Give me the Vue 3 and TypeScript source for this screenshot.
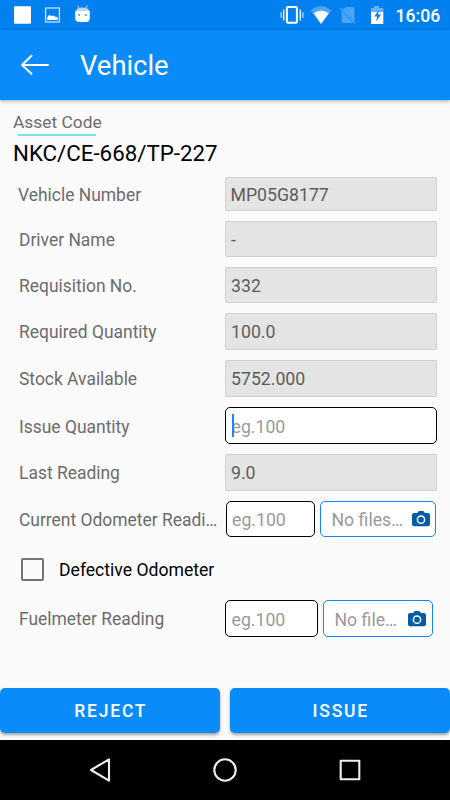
<script setup lang="ts">
interface Field {
  label: string
  value?: string
  kind: 'readonly' | 'input' | 'capture'
  caret?: boolean
  files?: string
  size?: string
}

const rows: Field[] = [
  { label: 'Vehicle Number', value: 'MP05G8177', kind: 'readonly', size: 'first' },
  { label: 'Driver Name', value: '-', kind: 'readonly' },
  { label: 'Requisition No.', value: '332', kind: 'readonly' },
  { label: 'Required Quantity', value: '100.0', kind: 'readonly', size: 'tall' },
  { label: 'Stock Available', value: '5752.000', kind: 'readonly', size: 'tall' },
  { label: 'Issue Quantity', kind: 'input', caret: true, size: 'tall' },
  { label: 'Last Reading', value: '9.0', kind: 'readonly', size: 'tall' },
  { label: 'Current Odometer Readi…', kind: 'capture', files: 'No files…', size: 'odometer' },
]

const fuel: Field[] = [
  { label: 'Fuelmeter Reading', kind: 'capture', files: 'No file…', size: 'fuel' },
]

const groups = [rows, fuel]
</script>

<template>
  <div class="screen">
    <div class="status">
      <svg class="status-left" width="96" height="30" viewBox="0 0 96 30">
        <rect x="14" y="6.3" width="17" height="17.4" rx="1" fill="#fff" />
        <rect x="45.6" y="8" width="13.8" height="14" fill="none" stroke="#c5e1fb" stroke-width="1.3" />
        <path d="M47.3 20v-3l2.2-2.2 2.2 1.5 1.5-1 1.8 1.5h1.5l1.4 1.2v2z" fill="#fff" />
        <path d="M77.5 5.5l1.5 3M87.3 5.5l-1.5 3" stroke="#cfe6fc" stroke-width="1" />
        <path d="M75.5 11.5q1-4 7-4t7 4z" fill="#b5d9fb" />
        <path d="M75.2 11h14.6v7q0 4-4 4h-6.6q-4 0-4-4z" fill="#fff" />
        <circle cx="79.2" cy="15" r="1.1" fill="#4da2f2" />
        <circle cx="85.8" cy="15" r="1.1" fill="#4da2f2" />
      </svg>
      <svg class="status-right" width="114" height="30" viewBox="0 0 114 30">
        <rect x="6.9" y="7" width="10" height="15.8" rx="1" fill="none" stroke="#fff" stroke-width="2" />
        <path d="M3.7 9.5v11M20.3 9.5v11" stroke="#e4f1fe" stroke-width="1.5" />
        <path d="M1.1 12.3v5.4M22.9 12.3v5.4" stroke="#b9dbfb" stroke-width="1.3" />
        <path d="M30.5 10.5Q41 2 51.5 10.5L41 24z" fill="#4da5f6" />
        <path d="M33.7 13.2Q41 7.8 48.7 13.2L41 24z" fill="#fff" />
        <path d="M66 7h7q1.4 0 1.4 1.4v13L62.7 9.2z" fill="#4da5f6" />
        <path d="M61.7 11.3L72.9 23H63.2q-1.5 0-1.5-1.4z" fill="#4da5f6" />
        <path d="M60.3 8.2l15 15.3" stroke="#4da5f6" stroke-width="1.3" />
        <path d="M94 6h5v2h4.3v4H91V8h3z" fill="#66b2f7" />
        <path d="M91 12h12.3v12H91z" fill="#fff" />
        <path d="M98.8 9.7l-4.5 6.8h2.8l-1 5 5-7h-3z" fill="#0781f1" />
      </svg>
      <span class="clock">16:06</span>
    </div>

    <header class="toolbar">
      <svg width="30" height="22" viewBox="0 0 30 22">
        <path d="M28 11H2M11.5 1.7L2 11l9.5 8.7" fill="none" stroke="#fff" stroke-width="2" stroke-linecap="round" stroke-linejoin="round" />
      </svg>
      <h1>Vehicle</h1>
    </header>

    <main>
      <section class="asset">
        <div class="asset-label">Asset Code</div>
        <div class="accent"></div>
        <div class="asset-code">NKC/CE-668/TP-227</div>
      </section>

      <template v-for="(group, g) in groups" :key="g">
        <label v-if="g === 1" class="defective">
          <span class="check"></span>
          <span>Defective Odometer</span>
        </label>
        <div class="fields">
          <div v-for="row in group" :key="row.label" class="row" :class="[row.kind, row.size]">
            <span class="label">{{ row.label }}</span>
            <div v-if="row.kind === 'readonly'" class="box">{{ row.value }}</div>
            <div v-else class="box edit">
              <i v-if="row.caret" class="caret"></i>eg.100
            </div>
            <div v-if="row.files" class="picker">
              <span>{{ row.files }}</span>
              <svg width="18" height="16" viewBox="0 0 18 16">
                <path d="M2 2h3.2L6.8 0h4.6l1.5 2H16q2 0 2 2v9.3q0 2-2 2H2q-2 0-2-2V4q0-2 2-2z" fill="#035da5" />
                <circle cx="9" cy="8.7" r="3.6" fill="none" stroke="#fff" stroke-width="1.5" />
              </svg>
            </div>
          </div>
        </div>
      </template>
    </main>

    <div class="actions">
      <button>REJECT</button>
      <button>ISSUE</button>
    </div>

    <nav>
      <svg width="450" height="60" viewBox="0 0 450 60">
        <g fill="none" stroke="#eee" stroke-width="2.1" stroke-linejoin="round">
          <path d="M109 19.3v21.4L91 30z" />
          <circle cx="225" cy="30" r="10.7" />
          <rect x="340.7" y="20.7" width="18.6" height="18.6" />
        </g>
      </svg>
    </nav>
  </div>
</template>

<style>
body {
  margin: 0;
}
</style>

<style scoped>
.screen {
  display: flex;
  flex-direction: column;
  width: 450px;
  height: 800px;
  overflow: hidden;
  background: #fafafa;
  font-family: Roboto, sans-serif;
  color: #6c6c6c;
}
.status {
  display: flex;
  height: 30px;
  flex: none;
  background: #0280ef;
}
.status-right {
  margin-left: 184px;
}
.clock {
  margin-left: 1.5px;
  color: #fff;
  font-size: 17.6px;
  font-weight: 500;
  line-height: 32px;
  white-space: nowrap;
}
.toolbar {
  display: flex;
  align-items: center;
  flex: none;
  box-sizing: border-box;
  height: 70px;
  padding: 0 0 0 20px;
  background: #0a8bfa;
  box-shadow: 0 1px 4px rgba(0, 0, 0, 0.35);
}
h1 {
  margin: 2px 0 0 30px;
  color: #fff;
  font-size: 27.4px;
  font-weight: 400;
  line-height: 34px;
}
main {
  flex: 1;
}
.asset {
  height: 77px;
  padding-left: 13px;
}
.asset-label {
  padding: 11px 0 1px;
  font-size: 17.4px;
  line-height: 22px;
}
.accent {
  width: 78px;
  height: 2px;
  margin-left: 5px;
  background: #80deea;
}
.asset-code {
  padding-top: 4px;
  color: #000;
  font-size: 22.3px;
  line-height: 26px;
}
.fields {
  display: flex;
  flex-direction: column;
  gap: 10px;
}
.row {
  display: flex;
  height: 36px;
  padding-left: 19px;
  font-size: 17.7px;
}
.row.tall {
  height: 37px;
}
.row.first {
  height: 34px;
  padding-left: 18px;
}
.label {
  width: 206px;
  flex: none;
  align-self: center;
  padding-top: 1px;
  font-size: 17.45px;
  line-height: 22px;
  white-space: nowrap;
}
.first .label {
  width: 207px;
}
.input .label {
  padding-top: 2px;
}
.box {
  display: flex;
  align-items: center;
  box-sizing: border-box;
  width: 212px;
  padding: 1px 0 0 5px;
  border: 1px solid #d0d0d0;
  border-radius: 2px;
  background: #e4e4e4;
  color: #5d5d5d;
  white-space: nowrap;
}
.tall .box {
  padding-top: 0;
}
.first .box {
  padding-left: 4.5px;
}
.box.edit {
  position: relative;
  padding: 1px 0 0 5.5px;
  border-color: #000;
  border-radius: 5px;
  background: #fff;
  color: #999;
}
.input .box.edit {
  padding-top: 2px;
}
.caret {
  position: absolute;
  top: 6px;
  left: 5.5px;
  width: 2px;
  height: 23px;
  background: #1b83fb;
}
.picker {
  display: flex;
  align-items: center;
  justify-content: space-between;
  box-sizing: border-box;
  border: 1px solid #1685fb;
  border-radius: 5px;
  background: #fff;
  color: #999;
  white-space: nowrap;
}
.picker span {
  padding-top: 1px;
}
.row.odometer {
  height: 36px;
}
.odometer .label {
  width: 207px;
}
.odometer .box {
  width: 89px;
  padding-left: 5px;
}
.odometer .picker {
  width: 116px;
  margin-left: 5px;
  padding: 0 5px 0 10.5px;
}
.row.fuel {
  height: 37px;
}
.fuel .box.edit {
  width: 93px;
  padding-top: 2px;
}
.fuel .picker {
  width: 109.5px;
  margin: 0 0 0 5px;
  padding: 0 5.5px 0 10.5px;
}
.fuel .picker span {
  padding-top: 2px;
}
.defective {
  display: flex;
  align-items: center;
  box-sizing: border-box;
  height: 63px;
  padding: 2px 0 0 21px;
  color: #000;
  font-size: 17.6px;
}
.check {
  box-sizing: border-box;
  width: 23px;
  height: 23px;
  margin-right: 15px;
  border: 2px solid #737373;
  border-radius: 2px;
}
.actions {
  display: flex;
  gap: 10px;
  flex: none;
  height: 52.5px;
}
button {
  width: 220px;
  height: 45px;
  padding: 2px 0 0 1.5px;
  border: 0;
  border-radius: 5px;
  background: #0a8bfa;
  box-shadow: 0 2px 3px rgba(0, 0, 0, 0.35);
  color: #fff;
  font-family: Roboto, sans-serif;
  font-size: 17.5px;
  font-weight: 500;
  letter-spacing: 1.8px;
}
nav {
  flex: none;
  height: 60px;
  background: #000;
}
nav svg {
  display: block;
}
</style>
